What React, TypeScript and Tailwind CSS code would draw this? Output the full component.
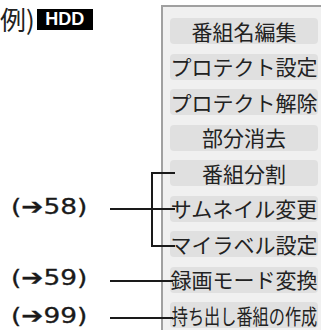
import React from 'react';

const items = [
  '番組名編集',
  'プロテクト設定',
  'プロテクト解除',
  '部分消去',
  '番組分割',
  'サムネイル変更',
  'マイラベル設定',
  '録画モード変換',
];

const refs = [
  { text: '58', top: 'top-[193px]' },
  { text: '59', top: 'top-[264px]' },
  { text: '99', top: 'top-[302px]' },
];

export default function App() {
  return (
    <div className="relative w-[321px] h-[330px] bg-white overflow-hidden flex font-['Noto_Sans_CJK_JP',sans-serif] text-[#222]">
      {/* Left column: example tag + page refs */}
      <div className="relative w-[161px] shrink-0">
        <div className="flex items-center pt-[3px]">
          <span className="text-[26px] leading-[32px]">例)</span>
          <span className="ml-[2px] w-[56px] h-[21px] bg-black text-white flex items-center justify-center font-['Liberation_Sans',sans-serif] font-bold text-[18px] leading-none">
            HDD
          </span>
        </div>

        {refs.map((r) => (
          <div
            key={r.text}
            className={`absolute left-[11px] ${r.top} origin-left scale-x-[1.2] whitespace-nowrap font-['DejaVu_Sans',sans-serif] text-[22px] leading-[28px] text-[#1a1a1a] [-webkit-text-stroke:0.3px_#1a1a1a]`}
          >
            (➔{r.text})
          </div>
        ))}
      </div>

      {/* Menu panel */}
      <div className="flex-1 min-w-0 mt-[5px] border-l-2 border-t-2 border-[#a0a0a0] bg-[#f0f0f0] pl-[7px] pr-[3px] pt-[11px] flex flex-col gap-[9.5px]">
        {items.map((t) => (
          <MenuItem key={t}>{t}</MenuItem>
        ))}
        <MenuItem>
          <span className="inline-block scale-x-[0.77] whitespace-nowrap">持ち出し番組の作成</span>
        </MenuItem>
      </div>

      {/* Callout lines */}
      <svg
        className="absolute inset-0 pointer-events-none"
        width="321"
        height="330"
        viewBox="0 0 321 330"
        fill="none"
        stroke="#1a1a1a"
        strokeWidth="2"
      >
        <path d="M175 173H152V246H175" />
        <path d="M110 209H175" />
        <path d="M110 281H173" />
        <path d="M110 318H173" />
      </svg>
    </div>
  );
}

function MenuItem({ children }: { children: React.ReactNode }) {
  return (
    <div className="h-[26px] shrink-0 rounded-[4px] bg-[#e0e0e0] flex items-center justify-center text-[21px] leading-none whitespace-nowrap">
      {children}
    </div>
  );
}
